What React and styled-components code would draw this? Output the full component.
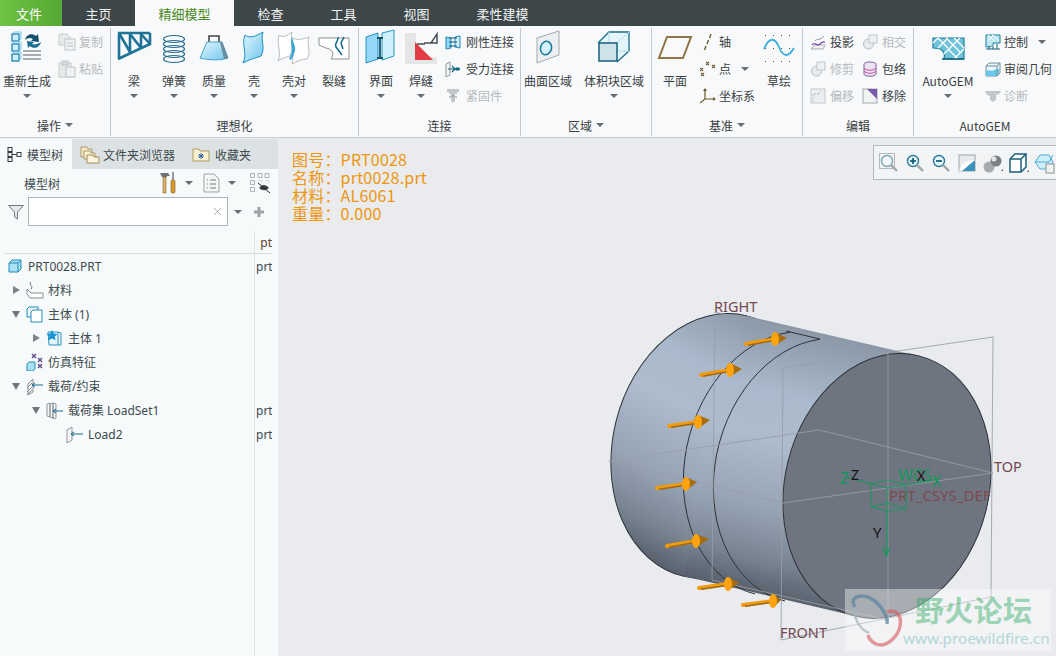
import React from "react";
import styled, { createGlobalStyle } from "styled-components";

const GlobalStyle = createGlobalStyle`
  html, body {
    margin: 0;
    padding: 0;
    background: #e9ebee;
    font-family: "Noto Sans", "Noto Sans CJK SC", sans-serif;
    font-size: 12px;
  }
`;

const cjk = `"Noto Sans CJK SC", "Noto Sans", sans-serif`;

const Page = styled.div`
  width: 1056px;
  height: 656px;
  display: flex;
  flex-direction: column;
  overflow: hidden;
`;

/* ---------- menu bar ---------- */
const MenuBar = styled.div`
  height: 26px;
  display: flex;
  background: #3d4648;
  font-family: ${cjk};
  font-size: 13px;
`;

const FileTab = styled.div`
  width: 62px;
  box-sizing: border-box;
  padding-right: 4px;
  display: flex;
  align-items: center;
  justify-content: center;
  color: #fff;
  background: linear-gradient(90deg, #6fc244, #57a834);
`;

const MenuTab = styled.div`
  padding: 0 23.5px;
  display: flex;
  align-items: center;
  color: ${(p) => (p.$active ? "#4a8a1c" : "#f2f4f4")};
  background: ${(p) => (p.$active ? "#f7f9fb" : "transparent")};
`;

/* ---------- ribbon ---------- */
const Ribbon = styled.div`
  height: 112px;
  box-sizing: border-box;
  display: flex;
  background: #f7f9fb;
  border-bottom: 1px solid #c6cdcd;
  font-family: ${cjk};
  color: #3a3f42;
`;

const Group = styled.div`
  width: ${(p) => p.$w}px;
  height: 108px;
  margin-top: 2px;
  box-sizing: border-box;
  display: flex;
  flex-direction: column;
  border-right: ${(p) => (p.$last ? "none" : "1px solid #c4cacc")};
`;

const GroupBody = styled.div`
  height: 86px;
  display: flex;
  padding-left: ${(p) => p.$pad || 0}px;
`;

const Caption = styled.div`
  height: 22px;
  display: flex;
  align-items: center;
  justify-content: center;
  gap: 4px;
`;

const LargeButton = styled.div`
  width: ${(p) => p.$w || 40}px;
  margin-right: ${(p) => p.$gap || 0}px;
  flex: none;
  display: flex;
  flex-direction: column;
  align-items: center;
  padding-top: 1px;
`;

const IconSlot = styled.div`
  height: 36px;
  display: flex;
  align-items: center;
  justify-content: center;
`;

const LargeLabel = styled.div`
  margin-top: 8px;
  line-height: 16px;
  white-space: nowrap;
`;

const Caret = styled.span`
  display: inline-block;
  flex: none;
  width: 0;
  height: 0;
  margin-top: ${(p) => p.$top || 0}px;
  margin-left: ${(p) => p.$left || 0}px;
  border-left: 4px solid transparent;
  border-right: 4px solid transparent;
  border-top: 4px solid #666c70;
`;

const SmallColumn = styled.div`
  width: ${(p) => (p.$w ? `${p.$w}px` : "auto")};
  margin-left: ${(p) => p.$left || 0}px;
  flex: none;
  display: flex;
  flex-direction: column;
`;

const SmallButton = styled.div`
  height: 27px;
  display: flex;
  align-items: center;
  gap: ${(p) => (p.$gap === undefined ? 4 : p.$gap)}px;
  white-space: nowrap;
  color: ${(p) => (p.$off ? "#b6babc" : "#3a3f42")};
`;

/* ---------- work area ---------- */
const Work = styled.div`
  flex: 1;
  display: flex;
  min-height: 0;
`;

const Side = styled.aside`
  width: 278px;
  flex: none;
  margin-top: 1px;
  display: flex;
  flex-direction: column;
  background: #f7fafb;
  color: #3d4a4e;
`;

const SideTabs = styled.div`
  height: 30px;
  display: flex;
  background: #dce2e3;
  font-family: ${cjk};
`;

const SideTab = styled.div`
  width: ${(p) => p.$w}px;
  flex: none;
  box-sizing: border-box;
  padding-left: ${(p) => p.$pad}px;
  display: flex;
  align-items: center;
  gap: ${(p) => p.$gap}px;
  background: ${(p) => (p.$active ? "#f7fafb" : "transparent")};
`;

const ToolRow = styled.div`
  height: 28px;
  display: flex;
  align-items: center;
  padding-left: 24px;
  font-family: ${cjk};
`;

const ToolTitle = styled.span`
  width: 136px;
`;

const SearchRow = styled.div`
  height: 29px;
  display: flex;
  align-items: center;
  padding-left: 8px;
`;

const SearchBox = styled.div`
  width: 200px;
  height: 29px;
  margin-left: 4px;
  box-sizing: border-box;
  display: flex;
  align-items: center;
  justify-content: flex-end;
  padding-right: 5px;
  background: #fff;
  border: 1px solid #a9b5b8;
`;

const TreeTable = styled.div`
  flex: 1;
  margin: 5px 5px 0 4px;
  display: flex;
  flex-direction: column;
  position: relative;

  &::after {
    content: "";
    position: absolute;
    left: 250px;
    top: 0;
    bottom: 0;
    width: 1px;
    background: #dfe4e5;
  }
`;

const TreeHead = styled.div`
  height: 23px;
  box-sizing: border-box;
  display: flex;
  justify-content: flex-end;
  align-items: flex-end;
  border-bottom: 1px solid #d7dcdd;
  padding-right: 1px;
  line-height: 20px;
  overflow: hidden;
  color: #5a4030;
`;

const TreeRow = styled.div`
  height: 24px;
  display: grid;
  grid-template-columns: 252px 16px;
  align-items: center;
`;

const TreeName = styled.div`
  display: flex;
  align-items: center;
  padding-left: ${(p) => p.$pad}px;
  font-family: "Noto Sans", "Noto Sans CJK SC", sans-serif;
  white-space: nowrap;
`;

const Twisty = styled.span`
  width: 20px;
  flex: none;
  display: flex;
  justify-content: center;
`;

const TwistyRight = styled.span`
  width: 0;
  height: 0;
  border-top: 4px solid transparent;
  border-bottom: 4px solid transparent;
  border-left: 7px solid #7d8588;
`;

const TwistyDown = styled.span`
  width: 0;
  height: 0;
  border-left: 4.5px solid transparent;
  border-right: 4.5px solid transparent;
  border-top: 7px solid #6f777a;
`;

const TreeIcon = styled.span`
  width: 22px;
  flex: none;
  display: flex;
`;

const TreeCell = styled.div`
  overflow: hidden;
`;

/* ---------- graphics window ---------- */
const Viewport = styled.main`
  flex: 1;
  position: relative;
  overflow: hidden;
  background: #e9ebee;
`;

const Canvas = styled.svg`
  position: absolute;
  left: 0;
  top: 0;
`;

const InfoBlock = styled.div`
  position: absolute;
  left: 14px;
  top: 12px;
  font-family: ${cjk};
  font-size: 16px;
  line-height: 18px;
  letter-spacing: 0.2px;
  color: #ef960c;
`;

const ViewBar = styled.div`
  position: absolute;
  top: 7px;
  right: -4px;
  width: 183px;
  height: 33px;
  padding-left: 2px;
  display: flex;
  align-items: center;
  background: #f2f4f6;
  border: 1px solid #b4b9bb;
`;

const ViewTool = styled.div`
  width: 26px;
  flex: none;
  display: flex;
  justify-content: center;
`;

const PlaneLabel = styled.text`
  font-family: "Noto Sans", sans-serif;
  font-size: ${(p) => p.$size || 14.5}px;
  fill: ${(p) => p.$color || "#74494f"};
`;

const Watermark = styled.div`
  position: absolute;
  right: 5px;
  bottom: 5px;
  width: 206px;
  height: 62px;
  display: flex;
  background: rgba(255, 255, 255, 0.4);
`;

const WatermarkText = styled.div`
  display: flex;
  flex-direction: column;
`;

const WatermarkTitle = styled.div`
  margin-left: 12px;
  font-family: ${cjk};
  font-weight: 700;
  font-size: 29px;
  line-height: 40px;
  letter-spacing: 0.3px;
  color: rgba(46, 170, 100, 0.45);
`;

const WatermarkUrl = styled.div`
  font-family: "Noto Sans", sans-serif;
  font-size: 15.3px;
  line-height: 18px;
  white-space: nowrap;
  color: rgba(110, 185, 185, 0.5);
`;

/* ---------- drawings ---------- */
const Svg = ({ s = 36, w, h, children }) => (
  <svg width={w || s} height={h || s} viewBox={`0 0 ${w || s} ${h || s}`} fill="none">
    {children}
  </svg>
);

const Cube = ({ x, y, s = 8 }) => (
  <g>
    <rect x={x} y={y} width={s} height={s} fill="#cdeefa" stroke="#1f86b4" strokeWidth="1.3" />
    <path d={`M${x} ${y}l2-2h${s}v${s}l-2 2`} stroke="#7cc4e0" />
  </g>
);

const Regen = () => (
  <Svg>
    <Cube x={3} y={5} s={7} />
    <Cube x={3} y={15} s={7} />
    <Cube x={3} y={25} s={7} />
    <path d="M16 11c1-5 6-8 11-4l2-2 1 8-8-1 2-2c-3-2-6-1-8 1z" fill="#14506e" />
    <path d="M32 13c-1 5-7 8-11 4l-2 2-1-7 7 1-2 2c3 1 6 0 9-2z" fill="#1a6c92" />
    <path d="M14 22h18M14 26h18M14 30h18" stroke="#8d9599" strokeWidth="1.6" />
  </Svg>
);

const Beam = () => (
  <Svg>
    <path d="M2 4H34M3 4V30M2 30L34 15M34 4V16M3 4L14 23M14 4V23M14 5L25 19M25 4V19M25 5L34 15" stroke="#1f7396" strokeWidth="2.6" />
  </Svg>
);

const Spring = () => (
  <Svg>
    {[10, 15, 20, 25, 30].map((y) => (
      <ellipse key={y} cx="18" cy={y} rx="10.5" ry="3.5" stroke="#2a6f8e" strokeWidth="1.2" />
    ))}
  </Svg>
);

const Weight = () => (
  <Svg>
    <path d="M13 13V7h10v6" stroke="#444" strokeWidth="1.6" />
    <path d="M11 13h15l6 16c-9 3-20 2-28 0z" fill="url(#blueFill)" stroke="#4aa0c8" />
    <path d="M26 13l6 16-4 1-4-17z" fill="#6d8c9c" />
  </Svg>
);

const Shell = () => (
  <Svg>
    <path d="M9 6c5 4 11 1 18-3-3 9 3 15-2 24-5 2-11 3-18 7 5-10-2-18 2-28z" fill="url(#blueFill)" stroke="#1c90c4" />
  </Svg>
);

const ShellPair = () => (
  <Svg>
    <path d="M3 6c4 3 8 1 13-3-2 9 2 15-2 24-4 1-7 2-12 5 4-9-2-17 1-26z" fill="#fff" stroke="#b8bcc0" />
    <path d="M17 9c5 3 10 1 16-1-3 8 3 14-2 22-5 0-10 2-15 5 3-10-3-16 1-26z" fill="#fff" stroke="#b8bcc0" />
    <path d="M16 8c1 6 4 9 3 14-1 3-2 6-4 9l-2-1c2-3 3-7 3-10 0-4-2-7 0-12z" fill="#3aa7d6" />
  </Svg>
);

const Crack = () => (
  <Svg>
    <path d="M3 9h30v21H15c4-6 1-10-5-11l-7-3z" fill="#fff" stroke="#8c9193" />
    <path d="M22 8c1 4-4 6-2 10l6 8M28 8l-3 6 2 6" stroke="#1c6f92" strokeWidth="1.6" />
  </Svg>
);

const Interface = () => (
  <Svg>
    <path d="M3 8l12-4v26L3 34z" fill="#93d8f8" stroke="#2c94c4" />
    <path d="M19 4l12-3v26l-12 4z" fill="#cff0fc" stroke="#2c94c4" />
    <path d="M14 9h6M17 9v20M14 29h6" stroke="#15566f" strokeWidth="1.8" />
  </Svg>
);

const Weld = () => (
  <Svg>
    <path d="M2 4h11v20l3 4h18v7H2z" fill="#e3e5e6" />
    <path d="M12 13v18h18z" fill="#e23d44" />
    <path d="M21 14h7l6-9v9h-6" stroke="#4a4f52" strokeWidth="1.5" />
    <path d="M14 15l8 0" stroke="#4a4f52" strokeWidth="1.5" />
  </Svg>
);

const Rigid = () => (
  <Svg s={16}>
    <path d="M1 3l5 1v10l-5 1z" fill="#8fd6f7" stroke="#2488b6" />
    <path d="M15 2l-5 1v10l5 1z" fill="#cdeffb" stroke="#2488b6" />
    <path d="M4 4h8M4 8h8M4 12h8" stroke="#14567a" />
  </Svg>
);

const Force = () => (
  <Svg s={16}>
    <path d="M1 3l4-2v13l-4 2z" fill="#f4f6f6" stroke="#94999b" />
    <path d="M3 8h12M7 5l3 3-3 3M11 7h3v2h-3z" stroke="#15617f" strokeWidth="1.1" />
  </Svg>
);

const Fastener = () => (
  <Svg s={16}>
    <path d="M2 1h12v3h-2v2h-2v2h2v2h-2v3l-2 2-2-2v-3H4V8h2V6H4V4H2z" fill="#c2c6c8" />
    <path d="M6 8h4" stroke="#93989a" />
  </Svg>
);

const SurfaceRegion = () => (
  <Svg>
    <path d="M7 9L29 2v24L7 34z" fill="#eceff0" stroke="#a4a9ab" />
    <ellipse cx="16" cy="19" rx="5.5" ry="6.8" transform="rotate(16 16 19)" fill="#d5f1fb" stroke="#1d7ba3" strokeWidth="1.6" />
  </Svg>
);

const VolumeRegion = () => (
  <Svg>
    <path d="M2 14L13 3h20v19L21 33" fill="#e3f4fb" stroke="#1c6c8c" strokeWidth="1.3" />
    <path d="M21 14L33 3M13 3v11M13 14l8 8M21 22h12" stroke="#b9dde9" />
    <rect x="3" y="14" width="18" height="18" fill="#cfe2ea" stroke="#15607f" strokeWidth="1.5" />
  </Svg>
);

const Plane = () => (
  <Svg>
    <path d="M10 8H34L26 29H2z" stroke="#8d7641" strokeWidth="2" />
  </Svg>
);

const Axis = () => (
  <Svg s={16}>
    <path d="M11 0l-1.5 4M8.5 6L7 10M6 12l-1.5 4" stroke="#6e5a2d" strokeWidth="1.4" />
  </Svg>
);

const Points = () => (
  <Svg s={16}>
    <path d="M6 1l3 3M9 1L6 4M12 4l3 3M15 4l-3 3M0 7l3 3M3 7l-3 3M1 12l3 3M4 12l-3 3" stroke="#6e5a2d" strokeWidth="1.1" />
  </Svg>
);

const Csys = () => (
  <Svg s={16}>
    <path d="M5 1v10l-5 4M5 11h10" stroke="#6e5a2d" strokeWidth="1.2" />
    <path d="M5 0l-2 3h4zM16 11l-3-2v4z" fill="#6e5a2d" />
  </Svg>
);

const Sketch = () => (
  <Svg>
    {[4, 12, 20, 28].map((x) =>
      [6, 19, 32].map((y) => <rect key={`${x}-${y}`} x={x} y={y} width="1" height="1" fill="#555" />)
    )}
    <path d="M3 20C8 8 14 8 18 18s9 11 15 1" stroke="#3aaedb" strokeWidth="1.8" />
  </Svg>
);

const Project = () => (
  <Svg s={16}>
    <path d="M1 15l4-4h10l-2 4z" fill="#f0f2f3" stroke="#a9aeb0" />
    <path d="M2 11c3-4 5 2 8-1s3-2 5-2" stroke="#7e3fb0" strokeWidth="1.2" />
    <path d="M5 7c2-3 5 0 9-5" stroke="#8c9193" />
  </Svg>
);

const Intersect = () => (
  <Svg s={16}>
    <circle cx="6.5" cy="10" r="5" fill="#e8eaeb" stroke="#b9bdbf" />
    <rect x="7" y="1" width="8" height="8" fill="#eef0f1" stroke="#c3c7c9" />
  </Svg>
);

const Wrap = () => (
  <Svg s={16}>
    <ellipse cx="8" cy="3" rx="6" ry="2" fill="#ece2f4" stroke="#7e5ea0" />
    <path d="M2 3v10c0 3 12 3 12 0V3" fill="#ece2f4" stroke="#7e5ea0" />
    <path d="M2 7c2 3 10 3 12 0M2 10c2 3 10 3 12 0" stroke="#c24f9a" />
  </Svg>
);

const OffsetTool = () => (
  <Svg s={16}>
    <rect x="1" y="1" width="14" height="14" fill="#eceeef" stroke="#c6cacc" />
    <path d="M3 14V6h7M11 3l-3 3" stroke="#bcc0c2" strokeDasharray="2 1" />
  </Svg>
);

const Remove = () => (
  <Svg s={16}>
    <rect x="1" y="1" width="14" height="14" fill="#f1f3f3" stroke="#a5aaac" />
    <path d="M5 1h10v10z" fill="#7a59a8" />
  </Svg>
);

const Mesh = () => (
  <Svg>
    <path d="M3 9h31v21H14c2-8-3-11-11-11z" fill="#6fc3d8" stroke="#1a7d98" strokeWidth="1.2" />
    <path d="M8 9l10 10M16 9l14 14M24 9l10 10M8 19L18 9M14 25L30 9M24 30L34 20M18 20l10 10M3 14l5-5" stroke="#ffffff" strokeWidth="1.3" />
    <path d="M12 30h22" stroke="#0f5c72" strokeWidth="1.5" />
  </Svg>
);

const Control = () => (
  <Svg s={16}>
    <path d="M1 1h14v8H8c1 3-2 4-7 4z" fill="#bfe7f2" stroke="#1a7d98" />
    <path d="M3 1l6 6M8 1l6 6M3 7l5-6" stroke="#fff" />
    <path d="M1 15h14M4 12v3M8 12v3M12 10v5" stroke="#15607a" />
  </Svg>
);

const Review = () => (
  <Svg s={16}>
    <path d="M1 5l3-3h11v10l-3 3H1z" fill="#e9f5fa" stroke="#6f8f9c" />
    <path d="M1 10c3-2 5 1 8-1 2-1 4-1 5-1v5l-2 2H1z" fill="#6cc8ea" />
    <path d="M12 15V5H1M12 5l3-3" stroke="#6f8f9c" />
  </Svg>
);

const Diagnose = () => (
  <Svg s={16}>
    <path d="M0 3h16l-2 3-3 1v5l-3 2-3-2V8L2 7z" fill="#c3c7c9" />
  </Svg>
);

const Copy = () => (
  <Svg s={18}>
    <path d="M1 1h8l3 3v8H1z" fill="#e7e9ea" stroke="#c9cccd" />
    <rect x="7" y="6" width="10" height="11" fill="#eff1f2" stroke="#c0c4c6" />
    <path d="M9 10h6M9 13h6" stroke="#c0c4c6" />
  </Svg>
);

const Paste = () => (
  <Svg s={18}>
    <rect x="1" y="3" width="12" height="14" fill="#e7e9ea" stroke="#c9cccd" />
    <rect x="4" y="1" width="6" height="4" fill="#d8dbdc" stroke="#c0c4c6" />
    <rect x="8" y="7" width="9" height="10" fill="#eff1f2" stroke="#c0c4c6" />
  </Svg>
);

const NodesTab = () => (
  <Svg s={15}>
    <rect x="1" y="0.5" width="4" height="4" stroke="#33393c" />
    <rect x="1" y="5.5" width="4" height="4" stroke="#33393c" />
    <rect x="1" y="10.5" width="4" height="4" stroke="#33393c" />
    <rect x="10" y="5.5" width="4" height="4" stroke="#33393c" />
    <path d="M5 7.5h5" stroke="#33393c" />
  </Svg>
);

const Folders = () => (
  <Svg w={20} h={20}>
    <path d="M1 3h6l1 2h4v8H1z" fill="#f6e7bf" stroke="#a79a78" />
    <path d="M4 7h6l1 2h4v6H4z" fill="#fbf0d0" stroke="#a79a78" />
    <path d="M7 11h6l1 2h5v6H7z" fill="#fdf5df" stroke="#a48e55" />
  </Svg>
);

const Favorite = () => (
  <Svg w={18} h={16}>
    <path d="M1 3h6l1 2h9v10H1z" fill="#fbf0d2" stroke="#b19a5e" />
    <path d="M9 7v6M6 10h6M7 8l4 4M11 8l-4 4" stroke="#2166a8" />
  </Svg>
);

const Tools = () => (
  <Svg w={17} h={22}>
    <path d="M0 1h8l2 3H7v1H2z" fill="#6f7375" />
    <rect x="3" y="5" width="3" height="16" fill="#d8b069" stroke="#8a6b33" strokeWidth=".6" />
    <path d="M13 0v8" stroke="#777" strokeWidth="1.5" />
    <rect x="11" y="8" width="4" height="13" rx="1.5" fill="#d79a2d" stroke="#7a5518" strokeWidth=".6" />
  </Svg>
);

const ListDoc = () => (
  <Svg w={17} h={20}>
    <path d="M1 1h10l5 5v13H1z" fill="#f4f6f6" stroke="#9ea3a5" />
    <path d="M4 7h1M7 7h6M4 11h1M7 11h6M4 15h1M7 15h6" stroke="#71787b" />
  </Svg>
);

const HideTree = () => (
  <Svg w={22} h={22}>
    <path d="M1.5 1.5h4v4h-4zM1.5 8.5h4v4h-4zM1.5 15.5h4v4h-4zM9 1.5h4v4H9zM16 1.5h4v4h-4z" stroke="#aeb3b5" />
    <path d="M9 8.5h4v3M16 8.5h4v3" stroke="#d3d6d7" />
    <path d="M10 16c3-4 7-4 10 0-3 3-7 3-10 0z" fill="#3c4144" />
    <path d="M9 11l12 10" stroke="#222" />
  </Svg>
);

const Funnel = () => (
  <Svg s={16}>
    <path d="M0.500 1.500h15L9.500 8v7l-3-2V8z" fill="#e6e8e9" stroke="#70777a" />
  </Svg>
);

const ClearX = () => (
  <Svg s={9}>
    <path d="M1 1l7 7M8 1L1 8" stroke="#a9aeb0" />
  </Svg>
);

const PlusIcon = () => (
  <Svg s={12}>
    <path d="M6 1v10M1 6h10" stroke="#9da2a4" strokeWidth="3" />
  </Svg>
);

const PartIcon = () => (
  <Svg w={16} h={14}>
    <path d="M3 4l3-3h9v9l-3 3H3z" fill="#a8e0f4" stroke="#238bb8" />
    <path d="M3 4h9v9M12 4l3-3" stroke="#238bb8" />
  </Svg>
);

const MaterialIcon = () => (
  <Svg w={18} h={18}>
    <path d="M5 1c-3 3 3 4 0 7" stroke="#70787b" />
    <path d="M1 8l4 4h12v5H4l-3-4z" fill="#fff" stroke="#878e91" />
  </Svg>
);

const BodiesIcon = () => (
  <Svg w={18} h={18}>
    <path d="M1 4l2-2h9v10H1z" fill="#eef8fc" stroke="#238bb8" />
    <path d="M5 7l2-2h9v12H5z" fill="#fff" stroke="#238bb8" />
  </Svg>
);

const BodyIcon = () => (
  <Svg w={16} h={16}>
    <path d="M2 2h10l3 1v12H3z" fill="#e7f5fb" stroke="#2c94c4" />
    <path d="M12 2v13" stroke="#2c94c4" />
    <path d="M6 0l1.8 3.6 3.7.5-2.7 2.5.7 3.7L6 8.5 2.600 10.300l.7-3.700L.5 4.100l3.700-.5z" fill="#1a93d0" />
  </Svg>
);

const SimIcon = () => (
  <Svg w={18} h={18}>
    <path d="M6 1l4 4M10 1L6 5M12 5l4 4M16 5l-4 4M12 11l4 4M16 11l-4 4" stroke="#5b4386" strokeWidth="1.3" />
    <path d="M1 11l2-2h6v7l-2 2H1z" fill="#a8e0f4" stroke="#238bb8" />
  </Svg>
);

const LoadsIcon = () => (
  <Svg w={18} h={18}>
    <path d="M2 7l5-5v13l-5 3z" stroke="#878e91" />
    <path d="M1 11l5-5M1 15l5-5M1 18l5-5" stroke="#878e91" />
    <path d="M6 8h11M9 6L6 8l3 2" stroke="#1b6a8a" />
  </Svg>
);

const LoadSetIcon = () => (
  <Svg w={18} h={18}>
    <path d="M1 3l3-1v14l-3-1zM4 3l3-1v15l-3-1zM7 2l3 1v14l-3 1z" fill="#f5f6f6" stroke="#90979a" />
    <path d="M7 10h10M10 8l-3 2 3 2" stroke="#1b6a8a" />
  </Svg>
);

const LoadIcon = () => (
  <Svg w={18} h={18}>
    <path d="M1 5l5-3v13l-5 3z" fill="#f5f6f6" stroke="#90979a" />
    <path d="M5 9h12M8 7L5 9l3 2" stroke="#1b6a8a" />
  </Svg>
);

const Loupe = ({ mark }) => (
  <Svg w={22} h={22}>
    {mark === "frame" && <rect x="1.500" y="1.500" width="15" height="15" fill="#f2f4f5" stroke="#b3b9bd" />}
    <circle cx="9" cy="9" r="5.500" fill={mark === "frame" ? "#f0f6f9" : "#e8f5fb"} stroke={mark === "frame" ? "#7ea3b4" : "#27779a"} strokeWidth="1.400" />
    <path d="M13 13l6 6" stroke="#a0a6a9" strokeWidth="2.400" />
    {mark && mark !== "frame" && <path d="M6 9h6" stroke="#175f80" strokeWidth="1.800" />}
    {mark === "plus" && <path d="M9 6v6" stroke="#175f80" strokeWidth="1.800" />}
  </Svg>
);

const Shade = () => (
  <Svg w={18} h={18}>
    <rect x="1" y="1" width="16" height="16" fill="#e7e9ea" stroke="#a0a5a8" />
    <path d="M1 17c2-7 8-11 16-11v11z" fill="#fff" />
    <path d="M4 17L17 6v11z" fill="#3b93bb" />
  </Svg>
);

const Blob = () => (
  <Svg w={22} h={22}>
    <circle cx="7" cy="15" r="5.500" fill="#a8acaf" />
    <circle cx="14" cy="9" r="5.500" fill="#7b8083" />
    <circle cx="12" cy="7" r="2.500" fill="#e4e6e7" />
    <path d="M19 19h2v-2z" fill="#555" />
  </Svg>
);

const ViewCube = () => (
  <Svg w={22} h={22}>
    <path d="M2 7l5-5h11v13l-5 5H2z" fill="#fff" stroke="#1c5f7f" strokeWidth="1.500" />
    <path d="M2 7h11v13M13 7l5-5" stroke="#1c5f7f" strokeWidth="1.500" />
    <path d="M19 20h2v-2z" fill="#555" />
  </Svg>
);

const SavedView = () => (
  <Svg w={22} h={22}>
    <path d="M1 10l5-7h9l4 7-4 7H6z" fill="#cdeefb" stroke="#4aa7cf" />
    <path d="M1 10h14l4-7" stroke="#4aa7cf" />
    <rect x="12" y="12" width="8" height="9" fill="#f0f1f1" stroke="#8a8f92" />
  </Svg>
);

const Arrow = ({ tail, disk, tip }) => (
  <g>
    <path d={`M${disk[0] + 1} ${disk[1] - 6.500}L${tip[0] + 1} ${tip[1]}L${disk[0] + 1} ${disk[1] + 6}z`} fill="#a56c12" />
    <line x1={tail[0]} y1={tail[1]} x2={disk[0]} y2={disk[1]} stroke="#f09a0e" strokeWidth="4" strokeLinecap="round" />
    <line x1={tail[0] + 2} y1={tail[1] + 1.200} x2={disk[0]} y2={disk[1] + 1.200} stroke="#9c6a14" strokeWidth="1.400" />
    <ellipse cx={disk[0]} cy={disk[1]} rx="4" ry="7" fill="#fda30f" />
  </g>
);

const arrows = [
  { tail: [746, 344], disk: [775, 339], tip: [786, 338] },
  { tail: [701, 375], disk: [730, 370], tip: [741, 369] },
  { tail: [669, 426], disk: [698, 422], tip: [709, 420] },
  { tail: [657, 488], disk: [686, 484], tip: [696, 482] },
  { tail: [667, 546], disk: [696, 541], tip: [708, 539] },
  { tail: [699, 588], disk: [728, 584], tip: [738, 583] },
  { tail: [743, 605], disk: [773, 601], tip: [780, 600] },
];

const Model = () => (
  <Canvas width="778" height="518" viewBox="278 138 778 518" fill="none">
    <defs>
      <linearGradient id="blueFill" x1="0" y1="0" x2="1" y2="1">
        <stop offset="0" stopColor="#e4f6fd" />
        <stop offset="1" stopColor="#6fc6ee" />
      </linearGradient>
      <linearGradient id="side" gradientUnits="userSpaceOnUse" x1="747" y1="316" x2="683" y2="577">
        <stop offset="0" stopColor="#8a98a8" />
        <stop offset="0.25" stopColor="#aab9cb" />
        <stop offset="0.42" stopColor="#aebccd" />
        <stop offset="0.68" stopColor="#97a4b5" />
        <stop offset="0.86" stopColor="#7a8593" />
        <stop offset="1" stopColor="#555e69" />
      </linearGradient>
    </defs>

    <ellipse cx="715" cy="446" rx="102" ry="134" transform="rotate(13.8 715 446)" fill="url(#side)" stroke="#2c3238" />
    <path d="M747 316L919 356L855 616L683 576z" fill="url(#side)" />
    <path d="M790 332.300A102 134 13.8 0 0 755 594" stroke="#2c3238" />
    <path d="M820 339.300A102 134 13.8 0 0 785 601" stroke="#2c3238" />
    <path d="M786 331L820 339" stroke="#2c3238" />
    <ellipse cx="887" cy="486" rx="102" ry="134" transform="rotate(13.8 887 486)" fill="#6f7580" stroke="#2c3238" />

    <g stroke="#9a9ea6" strokeOpacity="0.85">
      <path d="M783 368L993 337L991 597L781 640z" />
      <path d="M715 312L888 354V620L712 580z" />
      <path d="M609 461L819 430L993 473L783 503z" />
    </g>

    {arrows.map((a) => (
      <Arrow key={a.tail[0]} {...a} />
    ))}

    <PlaneLabel x="714" y="312">RIGHT</PlaneLabel>
    <PlaneLabel x="780" y="638">FRONT</PlaneLabel>
    <PlaneLabel x="994" y="472">TOP</PlaneLabel>
    <PlaneLabel x="889" y="501" $size={15} $color="#7d4a50">PRT_CSYS_DEF</PlaneLabel>

    <g stroke="#15985c">
      <path d="M871 484l17-4 18 5-19 3zM871 484v23l16 4 19-2v-24M887 488v23M871 507l17-4 18 6" strokeOpacity="0.9" />
      <path d="M872 484L846 477M906 485L938 479M887 511V556M883 547l3.500 9 3.500-9" strokeWidth="1.200" />
    </g>
    <PlaneLabel x="840" y="484" $size={16} $color="#15985c">Z</PlaneLabel>
    <PlaneLabel x="851" y="480" $size={14} $color="#111">Z</PlaneLabel>
    <PlaneLabel x="898" y="481" $size={16} $color="#15985c">WCS</PlaneLabel>
    <PlaneLabel x="917" y="481" $size={14} $color="#111">X</PlaneLabel>
    <PlaneLabel x="932" y="487" $size={16} $color="#15985c">X</PlaneLabel>
    <PlaneLabel x="873" y="538" $size={15} $color="#111">Y</PlaneLabel>
  </Canvas>
);

const WatermarkLogo = () => (
  <Svg w={58} h={62}>
    <path d="M10 18C2 6 22 2 34 16c6 7 9 14 8 19" stroke="#5f87a0" strokeOpacity=".75" strokeWidth="3.500" />
    <path d="M10 18c-2 10 4 22 14 26" stroke="#a4b4bf" strokeOpacity=".7" strokeWidth="2.500" />
    <path d="M42 23c10-3 15 4 13 14-2 11-14 22-24 18-4-2-7-5-8-9" stroke="#d65a5a" strokeOpacity=".6" strokeWidth="3.500" />
  </Svg>
);

const Large = ({ w, gap, icon, label, caret = true }) => (
  <LargeButton $w={w} $gap={gap}>
    <IconSlot>{icon}</IconSlot>
    <LargeLabel>{label}</LargeLabel>
    {caret && <Caret $top={5} />}
  </LargeButton>
);

const Small = ({ icon, label, off, caret, gap }) => (
  <SmallButton $off={off} $gap={gap}>
    {icon}
    {label}
    {caret && <Caret $left={7} />}
  </SmallButton>
);

const Row = ({ pad, twisty, icon, label, cell }) => (
  <TreeRow>
    <TreeName $pad={pad}>
      {twisty !== undefined && (
        <Twisty>
          {twisty === "right" && <TwistyRight />}
          {twisty === "down" && <TwistyDown />}
        </Twisty>
      )}
      <TreeIcon>{icon}</TreeIcon>
      {label}
    </TreeName>
    {cell && <TreeCell>prt</TreeCell>}
  </TreeRow>
);

export default function App() {
  return (
    <Page>
      <GlobalStyle />
      <MenuBar>
        <FileTab>文件</FileTab>
        <MenuTab>主页</MenuTab>
        <MenuTab $active>精细模型</MenuTab>
        <MenuTab>检查</MenuTab>
        <MenuTab>工具</MenuTab>
        <MenuTab>视图</MenuTab>
        <MenuTab>柔性建模</MenuTab>
      </MenuBar>

      <Ribbon>
        <Group $w={111}>
          <GroupBody $pad={3}>
            <Large w={48} icon={<Regen />} label="重新生成" />
            <SmallColumn $left={7}>
              <Small gap={3} off icon={<Copy />} label="复制" />
              <Small gap={3} off icon={<Paste />} label="粘贴" />
            </SmallColumn>
          </GroupBody>
          <Caption>操作<Caret /></Caption>
        </Group>

        <Group $w={248}>
          <GroupBody $pad={3}>
            <Large icon={<Beam />} label="梁" />
            <Large icon={<Spring />} label="弹簧" />
            <Large icon={<Weight />} label="质量" />
            <Large icon={<Shell />} label="壳" />
            <Large icon={<ShellPair />} label="壳对" />
            <Large icon={<Crack />} label="裂缝" caret={false} />
          </GroupBody>
          <Caption>理想化</Caption>
        </Group>

        <Group $w={162}>
          <GroupBody $pad={2}>
            <Large icon={<Interface />} label="界面" />
            <Large icon={<Weld />} label="焊缝" />
            <SmallColumn $left={4}>
              <Small gap={5} icon={<Rigid />} label="刚性连接" />
              <Small gap={5} icon={<Force />} label="受力连接" />
              <Small off gap={5} icon={<Fastener />} label="紧固件" />
            </SmallColumn>
          </GroupBody>
          <Caption>连接</Caption>
        </Group>

        <Group $w={131}>
          <GroupBody>
            <Large w={54} gap={9} icon={<SurfaceRegion />} label="曲面区域" caret={false} />
            <Large w={60} icon={<VolumeRegion />} label="体积块区域" />
          </GroupBody>
          <Caption>区域<Caret /></Caption>
        </Group>

        <Group $w={151}>
          <GroupBody>
            <Large w={46} icon={<Plane />} label="平面" caret={false} />
            <SmallColumn $left={2} $w={59}>
              <Small gap={3} icon={<Axis />} label="轴" />
              <Small gap={3} icon={<Points />} label="点" caret />
              <Small gap={3} icon={<Csys />} label="坐标系" />
            </SmallColumn>
            <Large icon={<Sketch />} label="草绘" caret={false} />
          </GroupBody>
          <Caption>基准<Caret /></Caption>
        </Group>

        <Group $w={111}>
          <GroupBody $pad={7}>
            <SmallColumn>
              <Small icon={<Project />} label="投影" />
              <Small off icon={<Intersect />} label="修剪" />
              <Small off icon={<OffsetTool />} label="偏移" />
            </SmallColumn>
            <SmallColumn $left={8}>
              <Small off icon={<Intersect />} label="相交" />
              <Small icon={<Wrap />} label="包络" />
              <Small icon={<Remove />} label="移除" />
            </SmallColumn>
          </GroupBody>
          <Caption>编辑</Caption>
        </Group>

        <Group $w={142} $last>
          <GroupBody $pad={4}>
            <Large w={60} icon={<Mesh />} label="AutoGEM" />
            <SmallColumn $left={7}>
              <Small gap={3} icon={<Control />} label="控制" caret />
              <Small gap={3} icon={<Review />} label="审阅几何" />
              <Small off gap={3} icon={<Diagnose />} label="诊断" />
            </SmallColumn>
          </GroupBody>
          <Caption>AutoGEM</Caption>
        </Group>
      </Ribbon>

      <Work>
        <Side>
          <SideTabs>
            <SideTab $w={72} $pad={7} $gap={5} $active><NodesTab />模型树</SideTab>
            <SideTab $w={112} $pad={8} $gap={3}><Folders />文件夹浏览器</SideTab>
            <SideTab $w={94} $pad={8} $gap={5}><Favorite />收藏夹</SideTab>
          </SideTabs>

          <ToolRow>
            <ToolTitle>模型树</ToolTitle>
            <Tools />
            <Caret $left={8} />
            <SmallColumn $left={10}><ListDoc /></SmallColumn>
            <Caret $left={8} />
            <SmallColumn $left={13}><HideTree /></SmallColumn>
          </ToolRow>

          <SearchRow>
            <Funnel />
            <SearchBox><ClearX /></SearchBox>
            <Caret $left={6} />
            <SmallColumn $left={11}><PlusIcon /></SmallColumn>
          </SearchRow>

          <TreeTable>
            <TreeHead>pt</TreeHead>
            <Row pad={2} icon={<PartIcon />} label="PRT0028.PRT" cell />
            <Row pad={2} twisty="right" icon={<MaterialIcon />} label="材料" />
            <Row pad={2} twisty="down" icon={<BodiesIcon />} label="主体 (1)" />
            <Row pad={22} twisty="right" icon={<BodyIcon />} label="主体 1" />
            <Row pad={2} twisty="none" icon={<SimIcon />} label="仿真特征" />
            <Row pad={2} twisty="down" icon={<LoadsIcon />} label="载荷/约束" />
            <Row pad={22} twisty="down" icon={<LoadSetIcon />} label="载荷集 LoadSet1" cell />
            <Row pad={42} twisty="none" icon={<LoadIcon />} label="Load2" cell />
          </TreeTable>
        </Side>

        <Viewport>
          <Model />
          <InfoBlock>
            <div>图号：PRT0028</div>
            <div>名称：prt0028.prt</div>
            <div>材料：AL6061</div>
            <div>重量：0.000</div>
          </InfoBlock>
          <ViewBar>
            <ViewTool><Loupe mark="frame" /></ViewTool>
            <ViewTool><Loupe mark="plus" /></ViewTool>
            <ViewTool><Loupe mark="minus" /></ViewTool>
            <ViewTool><Shade /></ViewTool>
            <ViewTool><Blob /></ViewTool>
            <ViewTool><ViewCube /></ViewTool>
            <ViewTool><SavedView /></ViewTool>
          </ViewBar>
          <Watermark>
            <WatermarkLogo />
            <WatermarkText>
              <WatermarkTitle>野火论坛</WatermarkTitle>
              <WatermarkUrl>www.proewildfire.cn</WatermarkUrl>
            </WatermarkText>
          </Watermark>
        </Viewport>
      </Work>
    </Page>
  );
}
